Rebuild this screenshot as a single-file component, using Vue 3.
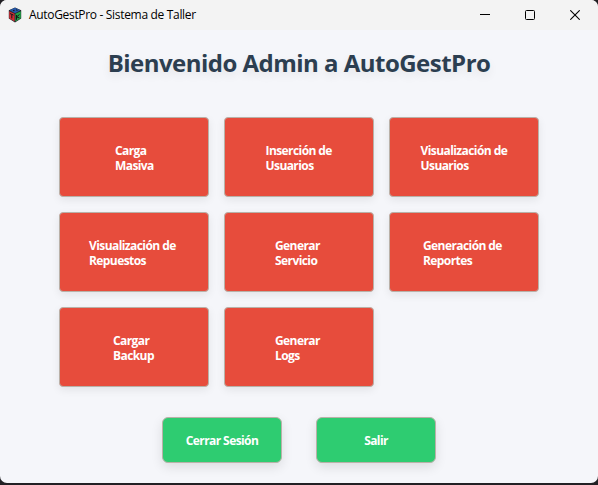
<script setup>
const actions = [
  ['Carga', 'Masiva', 38],
  ['Inserción de', 'Usuarios', 67],
  ['Visualización de', 'Usuarios', 87],
  ['Visualización de', 'Repuestos', 90],
  ['Generar', 'Servicio', 48],
  ['Generación de', 'Reportes', 82],
  ['Cargar', 'Backup', 42],
  ['Generar', 'Logs', 48],
]
</script>

<template>
  <div class="desktop">
    <div class="window">
      <header class="titlebar">
        <svg class="logo" width="14" height="16" viewBox="0 0 14 16">
          <path d="M7 .5 13.2 3.2V11.5L7 15.4.8 11.5V3.2z" fill="#25282c" />
          <path d="M7 .8 12.4 3.3 7 6.2 1.6 3.3z" fill="#2457a8" />
          <path d="M1.2 4.2 6.6 6.8v7.6L1.2 11.2z" fill="#ce2d35" />
          <path d="M12.8 4.2 7.4 6.8v7.6l5.4-3.2z" fill="#20a447" />
          <path d="M2 6.6l3.5 1.5M3.8 7.4v4M8.5 8v4.8M8.7 9.8l2.8-2.3M9 10l2.5 1M5 3.6h1.6M8 2.8l1.5.6" stroke="#15171a" fill="none" />
        </svg>
        <span class="caption">AutoGestPro - Sistema de Taller</span>
        <div class="controls">
          <svg width="10" height="10" viewBox="0 0 10 10"><path d="M0 4.5h10" stroke="#000" /></svg>
          <svg width="10" height="10" viewBox="0 0 10 10"><rect x=".5" y=".5" width="9" height="9" rx="1" fill="none" stroke="#000" /></svg>
          <svg width="10" height="10" viewBox="0 0 10 10"><path d="M.3.3l9.4 9.4M9.7.3.3 9.7" stroke="#000" stroke-width="1.1" /></svg>
        </div>
      </header>
      <main>
        <h1>Bienvenido Admin a AutoGestPro</h1>
        <div class="grid">
          <button v-for="(a, i) in actions" :key="i" class="action">
            <span class="label" :style="{ width: a[2] + 'px' }">
              <span class="line">{{ a[0] }}</span>
              <span class="line">{{ a[1] }}</span>
            </span>
          </button>
        </div>
        <footer>
          <button class="session">Cerrar Sesión</button>
          <button class="session">Salir</button>
        </footer>
      </main>
    </div>
  </div>
</template>

<style>
body { margin: 0; overflow: hidden; }
</style>

<style scoped>
.desktop { width: 598px; height: 485px; background: #222024; font-family: "Open Sans", "Noto Sans", sans-serif; }
.window { height: 483px; background: #f5f6fa; border-radius: 7px; overflow: hidden; }
.titlebar { height: 30px; box-sizing: border-box; background: #f3f3f3; display: flex; align-items: center; padding: 0 17px 1px 8px; }
.logo { flex: none; }
.caption { margin-left: 7px; font-size: 12px; letter-spacing: -0.32px; color: #000; white-space: nowrap; }
.controls { margin-left: auto; margin-right: 1px; display: flex; gap: 35px; }
main { display: flex; flex-direction: column; align-items: center; }
h1 { margin: 15px 0 0; height: 36px; line-height: 36px; font-size: 24px; font-weight: 700; letter-spacing: -0.52px; color: #2c3e50; white-space: nowrap; text-shadow: 0 4px 10px rgba(0, 0, 0, 0.08); }
.grid { margin-top: 36px; display: grid; grid-template-columns: repeat(3, 150px); grid-auto-rows: 80px; gap: 15px; }
button { box-sizing: border-box; padding: 0; display: flex; align-items: center; justify-content: center; border: 1px solid #b9b1a8; color: #fff; font-family: inherit; font-size: 12px; font-weight: 700; line-height: 15px; letter-spacing: -0.58px; white-space: nowrap; }
.action { padding-top: 1px; background: #e74c3c; border-radius: 4px; box-shadow: 0 3px 8px rgba(0, 0, 0, 0.08); }
.label { display: block; text-align: left; }
.line { display: block; height: 15px; }
footer { margin-top: 30px; display: flex; gap: 34px; }
.session { width: 120px; height: 46px; background: #2ecc71; border-radius: 6px; box-shadow: 0 4px 12px rgba(0, 0, 0, 0.11); }
</style>
